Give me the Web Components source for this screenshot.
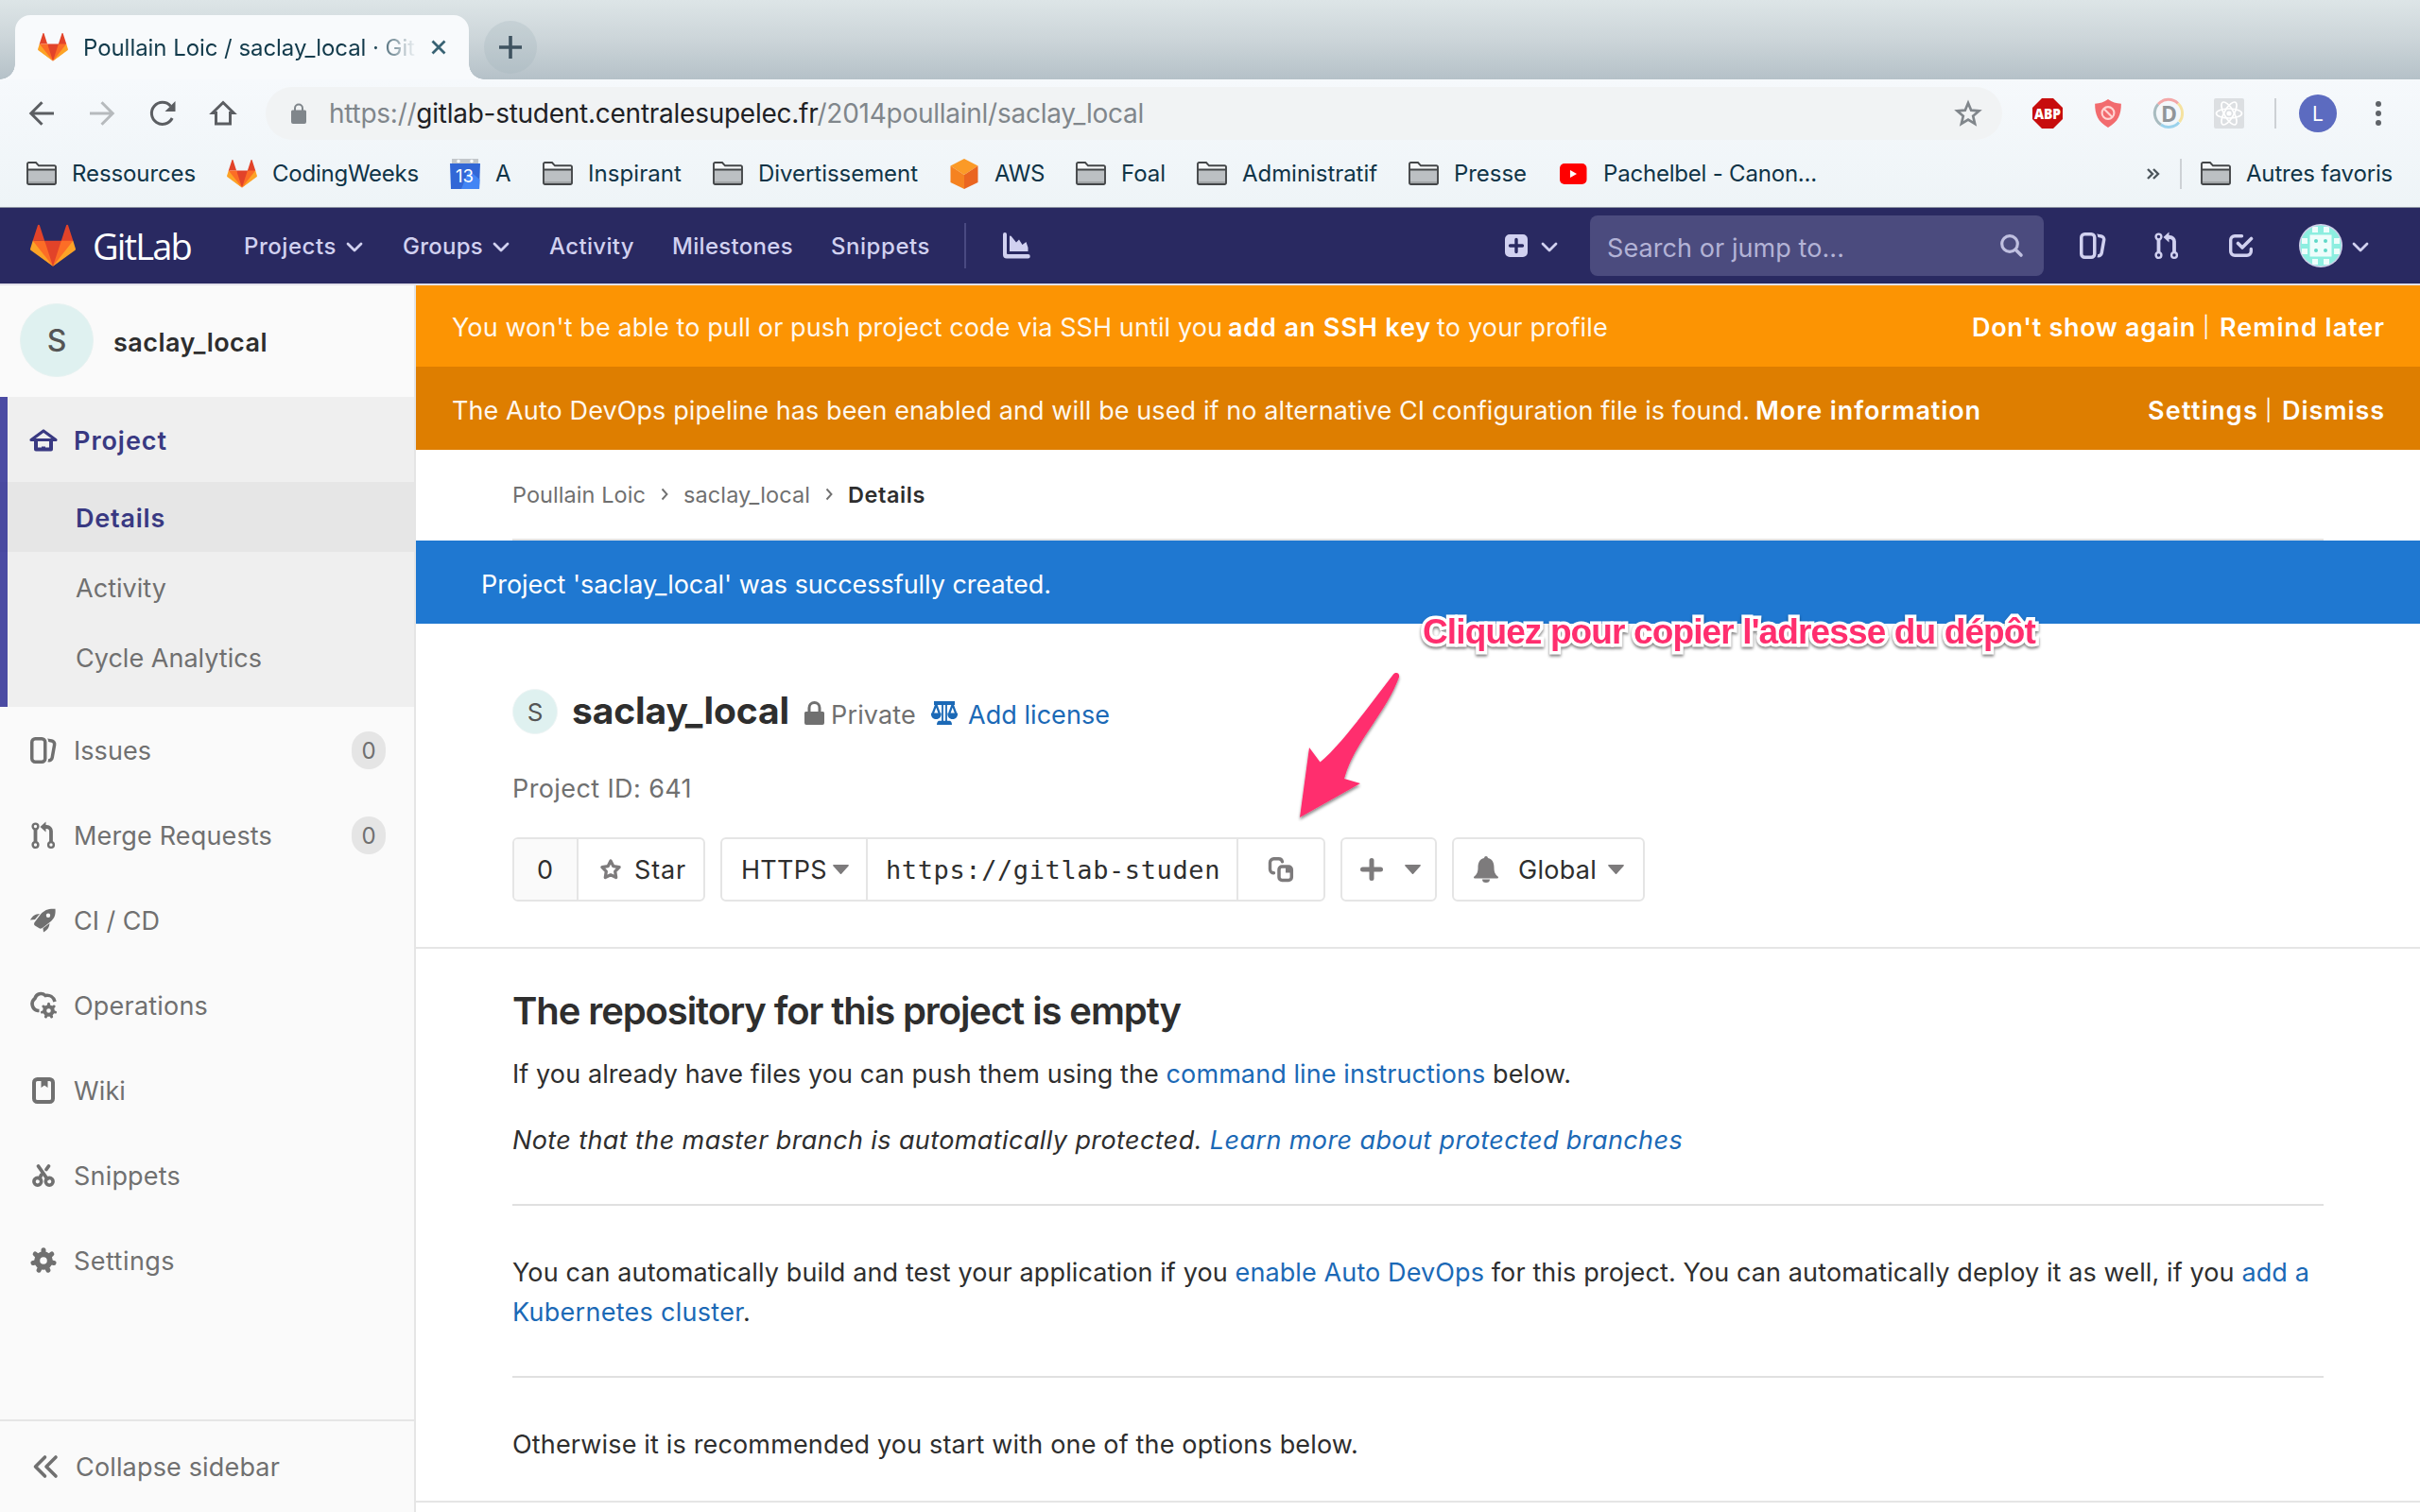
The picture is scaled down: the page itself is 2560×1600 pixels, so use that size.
<!DOCTYPE html>
<html lang="fr">
<head>
<meta charset="utf-8">
<title>Poullain Loic / saclay_local · GitLab</title>
<style>
html,body{margin:0;padding:0;width:2560px;height:1600px;overflow:hidden;background:#fff}
body{font-family:Inter,"Liberation Sans",sans-serif;font-size:27px;color:#2e2e2e}
</style>
</head>
<body>
<app-window></app-window>
<script>
const tanuki = '<path fill="#e24329" d="M2 14l9.38 9v-9l-4-12.28c-.205-.632-1.176-.632-1.38 0zM34 14l-9.38 9v-9l4-12.28c.205-.632 1.176-.632 1.38 0zM18 34.38L3 14h30z"/><path fill="#fc6d26" d="M18 34.38L11.38 14H2l4 11zM18 34.38L24.62 14H34l-4 11z"/><path fill="#fca326" d="M2 14L.1 20.16c-.18.565 0 1.2.5 1.56L18 34.38zM34 14l1.9 6.16c.18.565 0 1.2-.5 1.56L18 34.38z"/>';
const teeth = (n, r0, r1, w) => Array.from({length: n}, (_, i) => {
  const a = -Math.PI / 2 + i * 2 * Math.PI / n;
  return `<path d="M${(r0 * Math.cos(a)).toFixed(2)} ${(r0 * Math.sin(a)).toFixed(2)}L${(r1 * Math.cos(a)).toFixed(2)} ${(r1 * Math.sin(a)).toFixed(2)}" stroke-width="${w}" stroke-linecap="round"/>`;
}).join('');
const S = 'fill="none" stroke="currentColor"';
/* name: [viewBox, markup] */
const ICONS = {
  tanuki: ['0 0 36 36', tanuki],
  close: ['0 0 16 16', `<path d="M1.5 1.5l13 13M14.5 1.5l-13 13" ${S} stroke-width="2.8"/>`],
  plus: ['0 0 24 24', `<path d="M12 0v24M0 12h24" ${S} stroke-width="3.6"/>`],
  back: ['0 0 26 26', `<path d="M26 13H2.5M13.5 1.2L1.8 13l11.7 11.8" ${S} stroke-width="3"/>`],
  forward: ['0 0 26 26', `<path d="M0 13h23.500M12.500 1.200L24.200 13 12.500 24.800" ${S} stroke-width="3"/>`],
  reload: ['0 0 28 28', `<path d="M24.200 19A11.500 11.500 0 1 1 22.500 6.200" ${S} stroke-width="3"/><path d="M27.500 1v11h-11z" fill="currentColor"/>`],
  house: ['0 0 28 28', `<path d="M6.500 25V13.500H2.800L14 2.500l11.200 11H21.500V25z" ${S} stroke-width="3"/>`],
  padlock: ['0 0 16 22', '<path fill="currentColor" fill-rule="evenodd" d="M1.500 7.500H3V5.500a5 5 0 0 1 10 0v2h1.500A1.500 1.500 0 0 1 16 9v11a2 2 0 0 1-2 2H2a2 2 0 0 1-2-2V9a1.500 1.500 0 0 1 1.500-1.500zM5 7.500h6v-2a3 3 0 0 0-6 0z"/>'],
  star: ['0 0 30 30', `<path d="M15 4l3.200 7.700 8.300.7-6.300 5.400 1.900 8.100-7.100-4.300-7.100 4.300 1.900-8.100-6.300-5.400 8.300-.7z" ${S} stroke-width="2.700"/>`],
  abp: ['0 0 32 32', '<path d="M10 0h12l10 10v12L22 32H10L0 22V10z" fill="#c70d0d"/><text x="16" y="22" font-family="Open Sans" font-weight="800" font-size="16.500" fill="#fff" text-anchor="middle" textLength="28" lengthAdjust="spacingAndGlyphs">ABP</text>'],
  shield: ['0 0 28 30', '<path d="M14 1c4 3 8 4 13 4.500 0 11-3 18-13 23.500C4 23.500 1 16.500 1 5.500 6 5 10 4 14 1z" fill="#f26b6e"/><circle cx="14" cy="14.500" r="6" fill="none" stroke="#ffd4d2" stroke-width="2"/><path d="M10 10.500l8 8" stroke="#ffd4d2" stroke-width="2"/>'],
  dash: ['0 0 32 32', '<g fill="none" stroke-width="3"><path d="M5 6.200A14.500 14.500 0 0 1 26 5.500" stroke="#f4a7a7"/><path d="M26 5.500A14.500 14.500 0 0 1 27.500 25" stroke="#f5e2a0"/><path d="M27 25.500A14.500 14.500 0 0 1 8 28" stroke="#9bd2ec"/><path d="M8 28A14.500 14.500 0 0 1 5 6.200" stroke="#a9bcc0"/></g><text x="16.500" y="24.500" font-family="Open Sans" font-weight="700" font-size="24" fill="#909599" text-anchor="middle" textLength="17" lengthAdjust="spacingAndGlyphs">D</text>'],
  react: ['0 0 32 32', '<rect width="32" height="32" rx="2" fill="#dcdfe2"/><g fill="none" stroke="#fff" stroke-width="1.700"><ellipse cx="16" cy="16" rx="13.500" ry="5"/><ellipse cx="16" cy="16" rx="13.500" ry="5" transform="rotate(60 16 16)"/><ellipse cx="16" cy="16" rx="13.500" ry="5" transform="rotate(120 16 16)"/></g><circle cx="16" cy="16" r="2.600" fill="#fff"/>'],
  dots: ['0 0 6 26', '<g fill="#5f6368"><circle cx="3" cy="3" r="3"/><circle cx="3" cy="13" r="3"/><circle cx="3" cy="23" r="3"/></g>'],
  folder: ['0 0 32 32', '<path d="M1 26V5.500A1.500 1.500 0 0 1 2.500 4h7.500L13 7.500h16.500A1.500 1.500 0 0 1 31 9v17a1.500 1.500 0 0 1-1.500 1.500h-27A1.500 1.500 0 0 1 1 26z" fill="#f6f8f9"/><path d="M2 12h28v14.500H2z" fill="#bcc0c3"/><path d="M2 24h28v3H2z" fill="#a0a4a6"/><path d="M1 25.500V5.500A1.500 1.500 0 0 1 2.500 4h7.500L13 7.300h16.500A1.500 1.500 0 0 1 31 8.800v16.700a1.500 1.500 0 0 1-1.500 1.500h-27A1.500 1.500 0 0 1 1 25.500zM1 11.500h30" fill="none" stroke="#434648" stroke-width="1.900"/>'],
  calendar: ['0 0 32 32', '<path d="M2 0h28v8H2z" fill="#c3c7cb"/><circle cx="9" cy="2.500" r="1.700" fill="#fff"/><circle cx="23" cy="2.500" r="1.700" fill="#fff"/><path d="M0 5h32l-1 27H1z" fill="#3267d6"/><path d="M20 12l11.500 10-.5 10H12z" fill="#4285f4"/><text x="15.500" y="25.300" font-family="Inter" font-size="18.500" fill="#fff" text-anchor="middle" textLength="19" lengthAdjust="spacingAndGlyphs">13</text>'],
  aws: ['0 0 32 32', '<path d="M16 0l14.500 7.500L16 17 1.500 7.500z" fill="#fb9a27"/><path d="M1.500 7.500L16 17v15L1.500 25z" fill="#f58220"/><path d="M30.500 7.500L16 17v15l14.500-7z" fill="#ea6520"/>'],
  youtube: ['0 0 32 32', '<rect x="2" y="5" width="28.500" height="22" rx="5" fill="#f00"/><path d="M13 12l7 4-7 4z" fill="#fff"/>'],
  more: ['0 0 13 12', `<path d="M1 1l5 5-5 5M7 1l5 5-5 5" ${S} stroke-width="2.400"/>`],
  chevron: ['0 0 18 11', `<path d="M2 2l7 7 7-7" ${S} stroke-width="2.800" stroke-linecap="round" stroke-linejoin="round"/>`],
  chart: ['0 0 28 28', '<path fill="currentColor" d="M2 0a2 2 0 0 1 2 2v20a1 1 0 0 0 1 1h21.500a2 2 0 0 1 0 4.500H4a4 4 0 0 1-4-4V2a2 2 0 0 1 2-2zM7 4.500a1 1 0 0 1 1.800-.6l5.200 6.600 3-3 3.500 5.500 4-3 2 6V20H7z"/>'],
  plusbox: ['0 0 24 24', '<path fill="currentColor" fill-rule="evenodd" d="M5 0h14a5 5 0 0 1 5 5v14a5 5 0 0 1-5 5H5a5 5 0 0 1-5-5V5a5 5 0 0 1 5-5zm5.300 5.500v4.800H5.500a1.700 1.700 0 0 0 0 3.400h4.800v4.800a1.700 1.700 0 0 0 3.400 0v-4.800h4.800a1.700 1.700 0 0 0 0-3.400h-4.800V5.500a1.700 1.700 0 0 0-3.400 0z"/>'],
  search: ['0 0 24 24', `<circle cx="10" cy="10" r="8.300" ${S} stroke-width="3.200"/><path d="M16.500 16.500l5.500 5.500" ${S} stroke-width="3.600" stroke-linecap="round"/>`],
  issues: ['0 0 16 16', '<path fill="currentColor" d="M10.458 15.012l.311.055a3 3 0 0 0 3.476-2.433l1.389-7.879A3 3 0 0 0 13.200 1.280L11.230.933a3.002 3.002 0 0 0-.824-.031c.364.590.580 1.280.593 2.020l1.854.328a1 1 0 0 1 .811 1.158l-1.389 7.879a1 1 0 0 1-1.158.810l-.118-.020a3.980 3.980 0 0 1-.541 1.935zM3 0h4a3 3 0 0 1 3 3v10a3 3 0 0 1-3 3H3a3 3 0 0 1-3-3V3a3 3 0 0 1 3-3zm0 2a1 1 0 0 0-1 1v10a1 1 0 0 0 1 1h4a1 1 0 0 0 1-1V3a1 1 0 0 0-1-1H3z"/>'],
  merge: ['0 0 28 30', `<g ${S} stroke-width="2.400"><circle cx="5.500" cy="5.500" r="2.900"/><circle cx="5.500" cy="25" r="2.900"/><circle cx="22" cy="25" r="2.900"/></g><path d="M5.500 8.500v13.500M22 22V10.500A4.500 4.500 0 0 0 17.500 6H15" ${S} stroke-width="3.800"/><path d="M10.500 6l6-5.500v11z" fill="currentColor"/>`],
  todo: ['0 0 26 24', `<path d="M13.500 1.700H6A4.300 4.300 0 0 0 1.700 6v12A4.300 4.300 0 0 0 6 22.300h13A4.300 4.300 0 0 0 23.300 18v-2.500" ${S} stroke-width="3.400" stroke-linecap="round"/><path d="M9.500 9.500l4.500 4.500L23.500 4.500" ${S} stroke-width="3.600" stroke-linecap="round" stroke-linejoin="round"/>`],
  identicon: ['0 0 46 46', '<clipPath id="c"><circle cx="23" cy="23" r="21.500"/></clipPath><circle cx="23" cy="23" r="23" fill="#cfcfe8"/><g clip-path="url(#c)"><rect width="46" height="46" fill="#8deee0"/><g fill="#eefdfb"><rect x="11.500" y="11.500" width="23" height="23"/><path d="M14 3h6v6h-6zM26 3h6v6h-6zM14 37h6v6h-6zM26 37h6v6h-6zM3 15h6v6H3zM3 26h6v6H3zM37 15h6v6h-6zM37 26h6v6h-6z"/></g><g fill="#5fd9c8"><circle cx="18" cy="18" r="2"/><circle cx="28" cy="18" r="2"/><circle cx="18" cy="28" r="2"/><circle cx="28" cy="28" r="2"/></g></g>'],
  project: ['0 0 30 26', `<path d="M2 12.500L15 3l13 9.500z" ${S} stroke-width="3.200" stroke-linejoin="round"/><path d="M7 13v9.500h16V13" ${S} stroke-width="4" stroke-linejoin="round"/><path d="M13 24v-4.500h4V24z" fill="currentColor"/>`],
  rocket: ['0 0 28 26', '<path fill="currentColor" fill-rule="evenodd" d="M26.500.8c.6 6.500-1 10-5 13.500l-8 6.200c-1.500 1.200-2.800 1.500-4 .7L5 18.500c-1.300-1-1.200-2.500 0-4L11 6.500C15 2 19 .4 26.500.8zM19 5.500a2.200 2.200 0 1 0 0 4.400 2.200 2.200 0 0 0 0-4.400zM0 12.500C2.500 8 5 6.500 10 6L5 12zM14 25.500l-.5-4.300 7-5.200c-.5 4.500-2 7-6.500 9.500z"/>'],
  operations: ['0 0 30 30', `<path d="M10.500 20.500H9A7.300 7.300 0 0 1 6 7.500C7.500 2.500 13 1 17 4.500c4.500-.8 8.800 1.500 10 6.500" ${S} stroke-width="3.600"/><g transform="translate(20.500 20.500)" ${S}><circle r="4.300" stroke-width="4"/>${teeth(7, 5, 7.200, 3)}</g>`],
  wiki: ['0 0 24 28', `<rect x="2" y="2" width="20" height="24" rx="3.500" ${S} stroke-width="4"/><path d="M9.500 3h7v8l-3.500-2.500L9.500 11z" fill="currentColor"/>`],
  scissors: ['0 0 24 26', `<g ${S}><circle cx="5.800" cy="19.300" r="3.900" stroke-width="3.600"/><circle cx="18.200" cy="19.300" r="3.900" stroke-width="3.600"/><path d="M6.500 3L16 16.500M17.500 3l-2.500 3.500M9.500 12.500L8 16" stroke-width="3.800" stroke-linecap="round"/></g>`],
  gear: ['-14 -14 28 28', `<g ${S}><circle r="6.800" stroke-width="6"/>${teeth(7, 8.500, 11.300, 5)}</g>`],
  collapse: ['0 0 26 24', `<path d="M12.500 2L2.500 12l10 10M24 2L14 12l10 10" ${S} stroke-width="3.600" stroke-linecap="round" stroke-linejoin="round"/>`],
  crumb: ['0 0 8 14', `<path d="M1.500 1.500L6.500 7l-5 5.500" ${S} stroke-width="1.900"/>`],
  lock: ['0 0 21 25', '<path fill="currentColor" fill-rule="evenodd" d="M1.500 11H3.500V7a7 7 0 0 1 14 0v4h2A1.500 1.500 0 0 1 21 12.500V23a2 2 0 0 1-2 2H2a2 2 0 0 1-2-2V12.500A1.500 1.500 0 0 1 1.500 11zm5 0h8V7a4 4 0 0 0-8 0z"/>'],
  scale: ['0 0 28 25', `<path d="M3 2h22" ${S} stroke-width="4"/><path d="M12 3v18.500M16 3v18.500" ${S} stroke-width="1.800"/><path d="M6 25c0-2.600 1-4.300 2.700-4.300h10.600c1.700 0 2.700 1.700 2.700 4.300z" fill="currentColor"/><path d="M5.300 3.500L1.800 13M5.300 3.500L8.800 13M22.700 3.500L19.200 13M22.700 3.500L26.200 13" ${S} stroke-width="2.200"/><path d="M0 12.500h10.600c.4 4-1.800 6.500-5.300 6.500S-.4 16.500 0 12.500zM17.400 12.500H28c.4 4-1.800 6.500-5.300 6.500s-5.700-2.500-5.300-6.500z" fill="currentColor"/>`],
  favstar: ['0 0 24 24', `<path d="M12 3l2.900 5.700 6.200 1-4.400 4.500 1 6.300L12 17.800l-5.700 2.700 1-6.300L2.900 9.700l6.200-1z" ${S} stroke-width="3.300" stroke-linejoin="round"/>`],
  caret: ['0 0 17 10', '<path d="M.8 0h15.400a.7.7 0 0 1 .5 1.200L9.100 9.700a.8.8 0 0 1-1.200 0L.3 1.200A.7.7 0 0 1 .8 0z" fill="currentColor"/>'],
  copy: ['0 0 28 28', `<path d="M7.500 17.800A4 4 0 0 1 3.500 14V6.800a4 4 0 0 1 4-4h5a4 4 0 0 1 4 3" ${S} stroke-width="3.400" stroke-linecap="round"/><rect x="13" y="11" width="13.300" height="14.500" rx="3.200" ${S} stroke-width="3.500"/><path d="M20 11v6.500h6.500v-4L24 11z" fill="currentColor"/>`],
  add: ['0 0 24 24', `<path d="M12 2.500v19M2.500 12h19" ${S} stroke-width="5" stroke-linecap="round"/>`],
  bell: ['0 0 26 28', '<path fill="currentColor" d="M13 0c1.200 0 1.800.8 2 2 4.800 1.200 6.500 5 6.500 10 0 5.500 1.500 7.500 4 9.500.8.700.6 2-.5 2H1c-1.100 0-1.300-1.300-.5-2 2.500-2 4-4 4-9.500 0-5 1.700-8.800 6.500-10 .2-1.200.8-2 2-2zM9 24.500h8a4 3.500 0 0 1-8 0z"/>'],
};

const define = (name, html, css) => customElements.define(name, class extends HTMLElement {
  connectedCallback() {
    if (this.shadowRoot) return;
    this.attachShadow({mode: 'open'}).innerHTML = `<style>*{box-sizing:border-box}${css}</style>${html}`;
  }
});

customElements.define('ui-icon', class extends HTMLElement {
  connectedCallback() {
    if (this.shadowRoot) return;
    const [box, body] = ICONS[this.getAttribute('name')];
    const w = this.getAttribute('w'), h = this.getAttribute('h') || w;
    this.attachShadow({mode: 'open'}).innerHTML =
      `<style>:host{display:block;flex:none;width:${w}px;height:${h}px}svg{display:block;overflow:visible}</style><svg width="${w}" height="${h}" viewBox="${box}">${body}</svg>`;
  }
});

/* ---------- browser chrome ---------- */
define('browser-tabs', `
  <div class="tab"><ui-icon name="tanuki" w="32"></ui-icon><div class="title"><fit-text w="351">Poullain Loic / saclay_local · Git</fit-text></div><ui-icon class="x" name="close" w="16"></ui-icon></div>
  <div class="new"><ui-icon name="plus" w="24"></ui-icon></div>`,
 `:host{display:flex;height:84px;padding:16px 0 0 16px;background:linear-gradient(#dde5e7,#ccd5d9 50%,#b5c1c8)}
  .tab{width:480px;height:68px;border-radius:16px 16px 0 0;background:#f8fafc;display:flex;align-items:center;padding-left:24px;position:relative;color:#123a4b;font-size:24px}
  .tab::before,.tab::after{content:"";position:absolute;bottom:0;width:16px;height:16px;background:radial-gradient(circle at 0 0,transparent 15.5px,#f8fafc 16px)}
  .tab::before{left:-16px}.tab::after{right:-16px;background:radial-gradient(circle at 100% 0,transparent 15.5px,#f8fafc 16px)}
  .title{margin-left:16px;width:351px;-webkit-mask-image:linear-gradient(90deg,#000 305px,transparent 353px)}
  .x{margin-left:17px;color:#386273}
  .new{width:56px;height:56px;border-radius:50%;background:rgba(160,178,188,.28);margin:6px 0 0 16px;display:flex;align-items:center;justify-content:center;color:#3f5360}`);

define('browser-toolbar', `
  <ui-icon name="back" w="26"></ui-icon><ui-icon class="fwd" name="forward" w="26"></ui-icon><ui-icon name="reload" w="28"></ui-icon><ui-icon class="home" name="house" w="28"></ui-icon>
  <div class="omni"><ui-icon name="padlock" w="16" h="22"></ui-icon><fit-text w="862"><span class="s">https://</span><b>gitlab-student.centralesupelec.fr</b>/2014poullainl/saclay_local</fit-text><ui-icon class="star" name="star" w="30"></ui-icon></div>
  <div class="ext"><ui-icon name="abp" w="32"></ui-icon><ui-icon name="shield" w="32" h="32"></ui-icon><ui-icon name="dash" w="32"></ui-icon><ui-icon name="react" w="32"></ui-icon></div>
  <i></i><div class="who">L</div><ui-icon name="dots" w="6" h="26"></ui-icon>`,
 `:host{display:flex;align-items:center;height:72px;padding-left:31px;color:#5b5e62}
  .fwd{margin:0 37px 0 38px;color:#b6babd}.home{margin-left:36px}
  .omni{margin-left:31px;width:1837px;height:56px;border-radius:28px;background:#f1f3f4;display:flex;align-items:center;padding:0 21px 0 27px;color:#80868b;font-size:28px}
  .omni fit-text{margin-left:24px}.omni b{font-weight:400;color:#202124}.star{margin-left:auto}
  .ext{display:flex;gap:32px;margin-left:32px}
  i{width:2px;height:32px;background:#cdd1d5;margin:0 24px 0 32px}
  .who{width:40px;height:40px;border-radius:50%;background:#5c6bc0;color:#fff;font-size:21px;display:flex;align-items:center;justify-content:center;margin-right:41px}`);

customElements.define('bookmark-link', class extends HTMLElement {
  connectedCallback() {
    if (this.shadowRoot) return;
    this.attachShadow({mode: 'open'}).innerHTML = `<style>:host{display:flex;align-items:center;gap:16px;flex:none}</style><ui-icon name="${this.getAttribute('icon')}" w="32"></ui-icon><fit-text w="${this.getAttribute('w')}"><slot></slot></fit-text>`;
  }
});
define('bookmark-bar', `
  <bookmark-link icon="folder" w="131">Ressources</bookmark-link><bookmark-link icon="tanuki" w="155">CodingWeeks</bookmark-link><bookmark-link icon="calendar" w="17">A</bookmark-link><bookmark-link icon="folder" w="99">Inspirant</bookmark-link><bookmark-link icon="folder" w="169">Divertissement</bookmark-link><bookmark-link icon="aws" w="53">AWS</bookmark-link><bookmark-link icon="folder" w="47">Foal</bookmark-link><bookmark-link icon="folder" w="143">Administratif</bookmark-link><bookmark-link icon="folder" w="77">Presse</bookmark-link><bookmark-link icon="youtube" w="226">Pachelbel - Canon...</bookmark-link>
  <div class="end"><ui-icon name="more" w="13" h="12"></ui-icon><i></i><bookmark-link icon="folder" w="155">Autres favoris</bookmark-link></div>`,
 `:host{display:flex;align-items:center;gap:33px;height:64px;padding:0 29px 8px 28px;border-bottom:1px solid #8d94a3;font-size:24px;color:#0f3447}
  .end{margin-left:auto;display:flex;align-items:center;color:#0f3447}.end>ui-icon{color:#4d565c}i{width:2px;height:32px;background:#cdd1d5;margin:0 20px 0 22px}`);

define('browser-chrome', `<browser-tabs></browser-tabs><div><browser-toolbar></browser-toolbar><bookmark-bar></bookmark-bar></div>`,
 `:host{display:block;height:220px}div{background:linear-gradient(#f6f9fc,#eef4f7)}`);

/* ---------- GitLab ---------- */
define('gl-navbar', `
  <ui-icon name="tanuki" w="48"></ui-icon><fit-text class="brand" w="104">GitLab</fit-text>
  <fit-text style="margin-left:56px" w="98">Projects</fit-text><ui-icon class="c" name="chevron" w="18" h="11"></ui-icon>
  <fit-text style="margin-left:42px" w="85">Groups</fit-text><ui-icon class="c" name="chevron" w="18" h="11"></ui-icon>
  <fit-text style="margin-left:42px" w="90">Activity</fit-text><fit-text style="margin-left:40px" w="128">Milestones</fit-text><fit-text style="margin-left:40px" w="105">Snippets</fit-text>
  <i></i><ui-icon name="chart" w="28"></ui-icon>
  <div class="r"><ui-icon name="plusbox" w="24"></ui-icon><ui-icon style="margin:3px 34px 0 14px" name="chevron" w="18" h="11"></ui-icon>
  <div class="search"><fit-text w="251">Search or jump to...</fit-text><ui-icon name="search" w="24"></ui-icon></div>
  <ui-icon style="margin-left:38px" name="issues" w="28"></ui-icon><ui-icon style="margin-left:50px" name="merge" w="28" h="30"></ui-icon><ui-icon style="margin-left:52px" name="todo" w="26" h="24"></ui-icon><ui-icon style="margin-left:48px" name="identicon" w="46"></ui-icon><ui-icon style="margin:3px 0 0 10px" name="chevron" w="18" h="11"></ui-icon></div>`,
 `:host{display:flex;align-items:center;height:82px;padding:0 54px 0 32px;background:#292961;border-bottom:2px solid #e3e1eb;color:#d1d1f0;font-size:24px;font-weight:500}
  .brand{font:500 38px "Open Sans",sans-serif;color:#fff;margin-left:18px}
  .c{margin:3px 0 0 10px}
  i{width:2px;height:48px;background:#494981;margin:0 39px 0 36px}
  .r{margin-left:auto;display:flex;align-items:center}
  .search{width:480px;height:64px;border-radius:8px;background:#4b4b7e;display:flex;align-items:center;justify-content:space-between;padding:5px 22px 0 18px;font-size:27px;font-weight:400;color:#b3b3d6}
  .search ui-icon{margin-top:-6px;color:#c0c0e0}`);

customElements.define('side-item', class extends HTMLElement {
  connectedCallback() {
    if (this.shadowRoot) return;
    const g = n => this.getAttribute(n), icon = g('icon');
    this.attachShadow({mode: 'open'}).innerHTML = `<style>:host{box-sizing:border-box;display:flex;align-items:center;height:90px;padding:0 30px 0 31px;color:#707070}.i{width:47px}
      .b{margin-left:auto;width:36px;height:40px;border-radius:20px;background:#e5e5e5;font-size:24px;display:flex;align-items:center;justify-content:center}
      :host([sub]){height:74px;padding:2px 0 0 80px}:host([active]){font-weight:600;color:#393982;padding-top:2px}:host([sub][active]){background:#e6e6e6}</style>
      ${icon ? `<div class="i"><ui-icon name="${icon}" style="margin-left:${g('dx') || 0}px" w="${g('iw')}" h="${g('ih')}"></ui-icon></div>` : ''}<fit-text w="${g('w')}"><slot></slot></fit-text>${g('count') ? `<div class="b">${g('count')}</div>` : ''}`;
  }
});
define('gl-sidebar', `
  <header><div class="av">S</div><fit-text w="163">saclay_local</fit-text></header>
  <section><side-item class="top" active icon="project" iw="30" ih="26" w="99">Project</side-item><side-item sub active w="95">Details</side-item><side-item sub w="96">Activity</side-item><side-item sub w="197">Cycle Analytics</side-item></section>
  <nav><side-item icon="issues" dx="1" iw="28" ih="28" w="82" count="0">Issues</side-item><side-item icon="merge" dx="1" iw="28" ih="30" w="210" count="0">Merge Requests</side-item><side-item icon="rocket" dx="1" iw="28" ih="26" w="91">CI / CD</side-item><side-item icon="operations" dx="0" iw="30" ih="30" w="142">Operations</side-item><side-item icon="wiki" dx="3" iw="24" ih="28" w="55">Wiki</side-item><side-item icon="scissors" dx="3" iw="24" ih="26" w="113">Snippets</side-item><side-item icon="gear" dx="1" iw="28" ih="28" w="107">Settings</side-item></nav>
  <footer><ui-icon name="collapse" w="26" h="24"></ui-icon><fit-text w="216">Collapse sidebar</fit-text></footer>`,
 `:host{display:flex;flex-direction:column;flex:none;width:440px;background:#fafafa;border-right:2px solid #e5e5e5}
  header{height:118px;display:flex;align-items:center;padding:0 0 2px 21px;font-weight:600}
  .av{width:78px;height:78px;border-radius:50%;background:#dff1f0;border:1px solid #e6f2f1;display:flex;align-items:center;justify-content:center;font-size:32px;font-weight:500;color:#555;margin-right:21px}
  header fit-text{padding-top:4px}
  section{background:#efefef;box-shadow:inset 8px 0 #4b4ba3;height:328px;margin-bottom:1px}
  section side-item[active][sub]{box-shadow:inset 8px 0 #4949a0}
  footer{margin-top:auto;height:98px;border-top:2px solid #e5e5e5;display:flex;align-items:center;padding-left:35px;gap:19px;color:#707070}`);

define('gl-banner', `<div><slot></slot></div><div><slot name="actions"></slot></div>`,
 `:host{display:flex;align-items:center;justify-content:space-between;height:88px;padding:4px 37px 0 38px;color:#fff8ee;background:#de7e00}:host([light]){height:86px;padding-top:2px;background:#fc9403}
  div{display:flex;align-items:center;gap:6px}div:last-child{gap:11px}`);

define('gl-breadcrumb', `<fit-text w="141">Poullain Loic</fit-text><ui-icon name="crumb" w="8" h="14"></ui-icon><fit-text w="134">saclay_local</fit-text><ui-icon name="crumb" w="8" h="14"></ui-icon><fit-text class="cur" w="82">Details</fit-text>`,
 `:host{display:flex;align-items:center;height:96px;margin:0 102px;border-bottom:2px solid #e3e3e3;gap:16px;font-size:23.500px;color:#707070}.cur{font-weight:600;color:#2e2e2e}`);

define('button-group', `<slot></slot>`,
 `:host{display:flex;height:68px;border:2px solid #e5e5e5;border-radius:6px;background:#fff;overflow:hidden}
  ::slotted(div){display:flex;align-items:center}::slotted(div:not(:first-child)){border-left:2px solid #e5e5e5}`);

define('gl-project', `
  <div class="head"><div class="av">S</div><fit-text class="name" w="230">saclay_local</fit-text><ui-icon style="margin-left:16px" name="lock" w="21" h="25"></ui-icon><fit-text class="dim" style="margin-left:7px" w="90">Private</fit-text><ui-icon class="link" style="margin-left:16px" name="scale" w="28" h="25"></ui-icon><fit-text class="link" style="margin-left:11px" w="150">Add license</fit-text></div>
  <div class="id"><fit-text w="190">Project ID: 641</fit-text></div>
  <div class="row">
   <button-group><div class="cnt"><fit-text w="18">0</fit-text></div><div style="width:134px;padding-left:22px"><ui-icon name="favstar" w="24"></ui-icon><fit-text style="margin-left:13px" w="55">Star</fit-text></div></button-group>
   <button-group><div style="width:152px;padding-left:20px"><fit-text w="91">HTTPS</fit-text><ui-icon style="margin-left:6px" name="caret" w="17" h="10"></ui-icon></div><div style="width:392px;padding-left:19px"><fit-text class="mono" w="354">https://gitlab-studen</fit-text></div><div style="width:92px;padding-left:30px"><ui-icon name="copy" w="28"></ui-icon></div></button-group>
   <button-group><div style="width:98px;padding-left:19px"><ui-icon name="add" w="24"></ui-icon><ui-icon style="margin-left:23px" name="caret" w="17" h="10"></ui-icon></div></button-group>
   <button-group><div style="width:200px;padding-left:21px"><ui-icon name="bell" w="26" h="28"></ui-icon><fit-text style="margin-left:21px" w="83">Global</fit-text><ui-icon style="margin-left:12px" name="caret" w="17" h="10"></ui-icon></div></button-group>
  </div>`,
 `:host{display:block;height:344px;padding:64px 0 0 102px;border-bottom:2px solid #e5e5e5}
  .head{height:60px;display:flex;align-items:center}
  .av{width:48px;height:48px;border-radius:50%;background:#dff1f0;border:1px solid #eef5f5;display:flex;align-items:center;justify-content:center;color:#555;font-size:26px;margin:-2px 15px 0 0}
  .name{font-size:39px;font-weight:700;margin-top:-5px}
  .dim{color:#707070;margin-top:4px}.link{color:#1b69b6;margin-top:4px}
  .head ui-icon{color:#707070}.head ui-icon.link{color:#1b69b6;margin-top:0}
  .id{height:100px;margin-bottom:2px;display:flex;align-items:center;color:#707070}
  .row{display:flex;gap:16px}.row ui-icon{color:#7d7b7c}
  .cnt{width:66px;background:#fafafa;padding-left:24px}
  .mono{font-family:"DejaVu Sans Mono",monospace;font-size:27px}`);

define('gl-empty', `
  <h2><fit-text w="707">The repository for this project is empty</fit-text></h2>
  <p style="margin-top:23px"><fit-text w="1120">If you already have files you can push them using the <a>command line instructions</a> below.</fit-text></p>
  <p style="margin-top:28px"><fit-text w="1238"><em>Note that the master branch is automatically protected. <a>Learn more about protected branches</a></em></fit-text></p>
  <hr style="margin-top:46px">
  <p style="margin-top:50px"><fit-text w="1901">You can automatically build and test your application if you <a>enable Auto DevOps</a> for this project. You can automatically deploy it as well, if you <a>add a</a></fit-text><fit-text w="252"><a>Kubernetes cluster</a>.</fit-text></p>
  <hr style="margin-top:46px">
  <p style="margin-top:50px"><fit-text w="895">Otherwise it is recommended you start with one of the options below.</fit-text></p>
  <div class="end"></div>`,
 `:host{display:block;padding:41px 102px 0}
  h2{margin:0;height:48px;display:flex;align-items:center;font-size:40px;font-weight:600}
  p{margin:0;line-height:42px}p fit-text{display:block}a{color:#1b69b6}
  hr{border:0;margin:0;height:2px;background:#e0e0e0}
  .end{margin:38px -102px 0;height:2px;background:#e5e5e5}`);

define('callout-note', `<svg width="820" height="240" viewBox="1360 640 820 240">
   <defs><filter id="s" x="-10%" y="-20%" width="120%" height="150%"><feDropShadow dx="0" dy="2.500" stdDeviation="1.500" flood-color="#000" flood-opacity=".45"/></filter></defs>
   <path filter="url(#s)" fill="#ff2e6e" d="M1375 865L1385 791 1396.500 806.500C1418 789 1449 746 1474 713.500 1477 710.500 1481 712.500 1480 716.500 1466 755 1432 786 1422 824L1439 829Z"/>
  </svg><fit-text w="648">Cliquez pour copier l'adresse du dépôt</fit-text>`,
 `:host{position:absolute;left:1360px;top:640px;display:block}
  svg{display:block;width:820px;height:240px}
  fit-text{position:absolute;left:145px;top:7px;line-height:44px;font-family:"Liberation Sans",sans-serif;font-weight:700;font-size:37px;color:#ff2e6e;-webkit-text-stroke:7px #fff;paint-order:stroke fill;filter:drop-shadow(0 2px 1.500px rgba(0,0,0,.5))}`);

define('gl-main', `
  <gl-banner light><fit-text w="815">You won't be able to pull or push project code via SSH until you</fit-text><fit-text class="b" w="215">add an SSH key</fit-text><fit-text w="181">to your profile</fit-text>
   <fit-text slot="actions" class="b" w="237">Don't show again</fit-text><fit-text slot="actions" class="p" w="3">|</fit-text><fit-text slot="actions" class="b" w="175">Remind later</fit-text></gl-banner>
  <gl-banner><fit-text w="1373">The Auto DevOps pipeline has been enabled and will be used if no alternative CI configuration file is found.</fit-text><fit-text class="b" w="239">More information</fit-text>
   <fit-text slot="actions" class="b" w="117">Settings</fit-text><fit-text slot="actions" class="p" w="3">|</fit-text><fit-text slot="actions" class="b" w="109">Dismiss</fit-text></gl-banner>
  <gl-breadcrumb></gl-breadcrumb>
  <div class="flash"><fit-text w="603">Project 'saclay_local' was successfully created.</fit-text></div>
  <gl-project></gl-project><gl-empty></gl-empty>`,
 `:host{display:block;flex:1;min-width:0}.b{font-weight:600;color:#fff}.p{font-size:22px;text-indent:-2px}
  .flash{height:88px;background:#1f78d1;color:#fff;display:flex;align-items:center;padding:4px 0 0 69px}`);

define('app-window', `<browser-chrome></browser-chrome><gl-navbar></gl-navbar><main><gl-sidebar></gl-sidebar><gl-main></gl-main></main><callout-note></callout-note>`,
 `:host{display:block;width:2560px;height:1600px;overflow:hidden;position:relative;background:#fff}main{display:flex;height:1298px}`);

/* Single-line text tracked to an exact column width. */
customElements.define('fit-text', class extends HTMLElement {
  connectedCallback() {
    if (this.shadowRoot) return;
    this.attachShadow({mode: 'open'}).innerHTML = '<style>:host{display:block;flex:none;white-space:nowrap}span{display:inline-block}</style><span><slot></slot></span>';
    const host = this.getRootNode().host;
    const text = this.textContent || (host && host.textContent) || '';
    const w = +this.getAttribute('w'), natural = this.shadowRoot.querySelector('span').getBoundingClientRect().width;
    this.style.width = w + 'px';
    if (text.length > 1) this.style.letterSpacing = ((w - natural) / text.length).toFixed(3) + 'px';
  }
});
</script>
</body>
</html>
